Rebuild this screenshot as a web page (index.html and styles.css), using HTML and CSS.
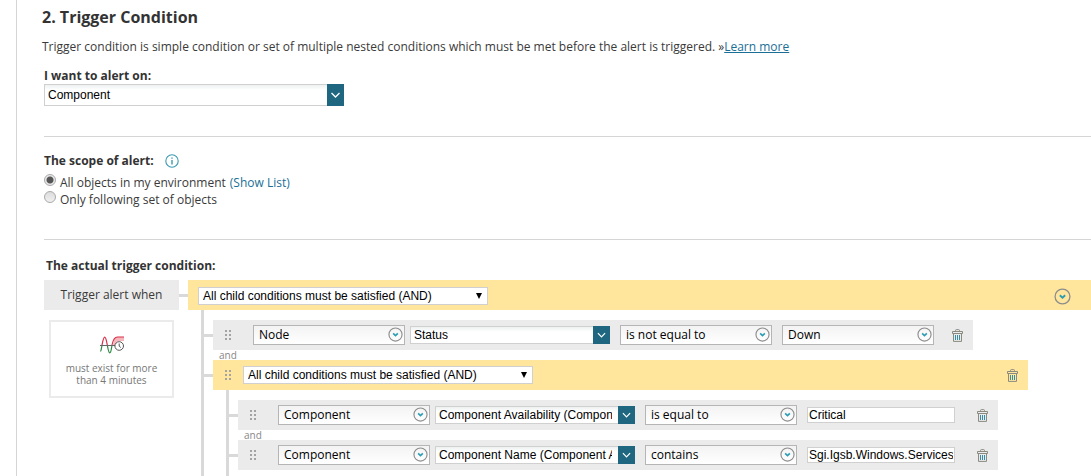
FILE: index.html
```html
<!DOCTYPE html>
<html lang="en">
<head>
  <meta charset="UTF-8">
  <title>Trigger Condition</title>
  <link rel="stylesheet" href="styles.css">
</head>
<body>

  <!-- shared icons -->
  <svg class="sprite" width="0" height="0" aria-hidden="true">
    <symbol id="chevron" viewBox="0 0 17 20">
      <path d="M4.5 8 L8.5 12 L12.5 8" fill="none" stroke="#fff" stroke-width="1.3"/>
    </symbol>
    <symbol id="circle-down" viewBox="0 0 16 16">
      <circle cx="8" cy="8" r="7" fill="none" stroke="#8c8c8c" stroke-width="1.2"/>
      <path d="M5.5 6.8 L8 9.2 L10.5 6.8" fill="none" stroke="#2b9bb3" stroke-width="1.7"/>
    </symbol>
    <symbol id="trash" viewBox="0 0 11 13">
      <path d="M3.5 2.5 V1.5 Q3.5 0.6 4.5 0.6 H6.5 Q7.5 0.6 7.5 1.5 V2.5 M0.5 4.5 V2.5 H10.5 V4.5 Z M1.5 4.5 V12.4 H9.5 V4.5" fill="none" stroke="#8a8a80"/>
      <path d="M3.5 6 V11 M5.5 6 V11 M7.5 6 V11" stroke="#338fa8"/>
    </symbol>
    <symbol id="grip" viewBox="0 0 6 10">
      <path d="M0 0h2v2h-2z M4 0h2v2h-2z M0 4h2v2h-2z M4 4h2v2h-2z M0 8h2v2h-2z M4 8h2v2h-2z" fill="#a3a3a3"/>
    </symbol>
  </svg>

  <main class="panel">
    <h1>2. Trigger Condition</h1>
    <p class="intro">Trigger condition is simple condition or set of multiple nested conditions which must be met before the alert is triggered. »<a href="#">Learn more</a></p>

    <section class="block alert-on">
      <label class="title" for="alertOn">I want to alert on:</label>
      <div class="combo combo-large">
        <select id="alertOn"><option>Component</option></select>
        <svg><use href="#chevron"/></svg>
      </div>
    </section>

    <section class="block scope">
      <h2 class="title">The scope of alert:
        <svg class="info" viewBox="0 0 14 14">
          <circle cx="7" cy="7" r="6.2" fill="none" stroke="#3b9ab2" stroke-width="1.1"/>
          <path d="M7 3.4 V4.8 M7 6 V10.4" stroke="#3b9ab2" stroke-width="1.4"/>
        </svg>
      </h2>
      <div class="radio-row">
        <input type="radio" name="scope" id="scopeAll" checked>
        <label for="scopeAll">All objects in my environment</label>
        <a href="#">(Show List)</a>
      </div>
      <div class="radio-row">
        <input type="radio" name="scope" id="scopeSet">
        <label for="scopeSet">Only following set of objects</label>
      </div>
    </section>

    <section class="block trigger">
      <h2 class="title">The actual trigger condition:</h2>

      <div class="builder">
        <div class="side">
          <div class="when">Trigger alert when</div>
          <div class="duration">
            <svg viewBox="0 0 24 18">
              <path d="M13 9 C14 3 15.5 1 18 1 H24 V5 H18 L15 9 Z" fill="#f6b7bd"/>
              <path d="M2 9 C3 4 3.5 1.2 4.7 1.2 C6 1.2 6.5 5 7.3 9 M12 9 C13 4 14.5 1 17.5 1 H24" fill="none" stroke="#d9304a" stroke-width="1.2"/>
              <path d="M0.5 15.5 C1.3 14.5 1.6 11.5 2 9 M7.3 9 C8 13 8.5 16.8 9.8 16.8 C11 16.8 11.4 13 12 9" fill="none" stroke="#2e8b45" stroke-width="1.2"/>
              <path d="M0 9.5 H15" stroke="#666"/>
              <circle cx="19.2" cy="10" r="4.3" fill="#fff" stroke="#555"/>
              <path d="M19.2 7.5 V10.2 L20.8 11.5" fill="none" stroke="#555"/>
            </svg>
            must exist for more than 4 minutes
          </div>
        </div>

        <div class="tree">
          <div class="group root">
            <div class="group-select">
              <select aria-label="Group operator"><option>All child conditions must be satisfied (AND)</option></select>
              <span class="arrow"></span>
            </div>
            <button class="more" aria-label="More"><svg><use href="#circle-down"/></svg></button>
          </div>

          <ul class="children">
            <li>
              <div class="condition">
                <svg class="grip"><use href="#grip"/></svg>
                <div class="drop"><select aria-label="Object"><option>Node</option></select><svg><use href="#circle-down"/></svg></div>
                <div class="combo"><select aria-label="Field"><option>Status</option></select><svg><use href="#chevron"/></svg></div>
                <div class="drop"><select aria-label="Operator"><option>is not equal to</option></select><svg><use href="#circle-down"/></svg></div>
                <div class="drop"><select aria-label="Value"><option>Down</option></select><svg><use href="#circle-down"/></svg></div>
                <button class="delete" aria-label="Delete"><svg><use href="#trash"/></svg></button>
              </div>
              <div class="joiner">and</div>
            </li>
            <li>
              <div class="group nested">
                <svg class="grip"><use href="#grip"/></svg>
                <div class="group-select">
                  <select aria-label="Group operator"><option>All child conditions must be satisfied (AND)</option></select>
                  <span class="arrow"></span>
                </div>
                <button class="delete" aria-label="Delete"><svg><use href="#trash"/></svg></button>
              </div>

              <ul class="children">
                <li>
                  <div class="condition">
                    <svg class="grip"><use href="#grip"/></svg>
                    <div class="drop"><select aria-label="Object"><option>Component</option></select><svg><use href="#circle-down"/></svg></div>
                    <div class="combo"><select aria-label="Field"><option>Component Availability (Component)</option></select><svg><use href="#chevron"/></svg></div>
                    <div class="drop"><select aria-label="Operator"><option>is equal to</option></select><svg><use href="#circle-down"/></svg></div>
                    <input type="text" aria-label="Value" value="Critical">
                    <button class="delete" aria-label="Delete"><svg><use href="#trash"/></svg></button>
                  </div>
                  <div class="joiner">and</div>
                </li>
                <li>
                  <div class="condition">
                    <svg class="grip"><use href="#grip"/></svg>
                    <div class="drop"><select aria-label="Object"><option>Component</option></select><svg><use href="#circle-down"/></svg></div>
                    <div class="combo"><select aria-label="Field"><option>Component Name (Component APM)</option></select><svg><use href="#chevron"/></svg></div>
                    <div class="drop"><select aria-label="Operator"><option>contains</option></select><svg><use href="#circle-down"/></svg></div>
                    <input type="text" aria-label="Value" value="Sgi.Igsb.Windows.Services">
                    <button class="delete" aria-label="Delete"><svg><use href="#trash"/></svg></button>
                  </div>
                </li>
              </ul>
            </li>
          </ul>
        </div>
      </div>
    </section>
  </main>

</body>
</html>
```

FILE: styles.css
```css
* {
  box-sizing: border-box;
}

body {
  margin: 0;
  background: #fff;
  color: #3a3a3a;
  font-family: "Open Sans", sans-serif;
  font-size: 12px;
  line-height: 16px;
}

.sprite {
  position: absolute;
}

.panel {
  min-height: 100vh;
  margin-left: 16px;
  padding: 6px 0 0 25px;
  border-left: 1px solid #d5d5d5;
}

h1 {
  margin: 0;
  color: #333;
  font-size: 16px;
  font-weight: 700;
  line-height: 22px;
}

.intro {
  margin: 10px 0 0;
  line-height: 18px;
}

a {
  color: #1b6f96;
}

.block {
  margin-left: 2px;
}

.title {
  display: block;
  margin: 0;
  color: #333;
  font-size: 12px;
  font-weight: 700;
  line-height: 16px;
}

.alert-on {
  padding: 12px 0 30px;
}

.scope {
  padding: 16px 0 31px;
  border-top: 1px solid #d5d5d5;
}

.scope .title {
  display: flex;
  align-items: center;
  gap: 11px;
  margin-bottom: 5px;
}

.info {
  width: 14px;
  height: 14px;
}

.trigger {
  padding-top: 18px;
  border-top: 1px solid #d5d5d5;
}

.trigger .title {
  margin-left: 2px;
}

/* form controls */
select,
input,
button {
  margin: 0;
  padding: 0;
  font: inherit;
  color: #000;
}

select {
  appearance: none;
  display: block;
  width: 100%;
  height: 100%;
  border-radius: 0;
}

button {
  display: flex;
  border: 0;
  background: none;
  cursor: pointer;
}

.radio-row {
  display: flex;
  gap: 4px;
  line-height: 17px;
}

.radio-row a {
  text-decoration: none;
}

input[type="radio"] {
  appearance: none;
  width: 12px;
  height: 12px;
  border: 1px solid #a9a9a9;
  border-radius: 50%;
  background: linear-gradient(#dcdcdc, #f0f0f0);
}

input[type="radio"]:checked {
  background: radial-gradient(circle, #555 3px, #e8e8e8 4px);
}

.combo {
  position: relative;
  width: 200px;
  height: 18px;
}

.combo select {
  padding: 0 22px 0 3px;
  border: 1px solid #d0d0d0;
  background: linear-gradient(#eef1f1, #fff 5px);
  font-family: "Liberation Sans", Arial, sans-serif;
}

.combo svg {
  position: absolute;
  top: 0;
  right: 0;
  width: 17px;
  height: 100%;
  background: #1f6780;
  pointer-events: none;
}

.combo-large {
  width: 300px;
  height: 22px;
}

.drop {
  position: relative;
  width: 152px;
  height: 20px;
}

.drop select {
  padding: 0 20px 0 5px;
  border: 1px solid #b5b5b5;
  background: linear-gradient(#f3f3f3, #fff);
}

.drop svg {
  position: absolute;
  top: 2px;
  right: 2px;
  width: 15px;
  height: 15px;
  pointer-events: none;
}

.group-select {
  position: relative;
  width: 290px;
  height: 18px;
}

.group-select select {
  padding: 0 20px 0 4px;
  border: 1px solid #d0d0d0;
  background: #fff;
  font-family: "Liberation Sans", Arial, sans-serif;
}

.arrow {
  position: absolute;
  top: 6px;
  right: 6px;
  border: 3px solid transparent;
  border-top: 6px solid #000;
  border-bottom: 0;
  pointer-events: none;
}

input[type="text"] {
  width: 148px;
  height: 16px;
  padding: 0 1px;
  border: 1px solid #d0d0d0;
  background: #fff;
  font-family: "Liberation Sans", Arial, sans-serif;
}

/* condition builder */
.builder {
  display: flex;
  margin-top: 6px;
}

.side {
  flex: none;
  width: 135px;
}

.when {
  height: 30px;
  background: #ebebeb;
  line-height: 30px;
  text-align: center;
}

.duration {
  margin: 10px 5px 0;
  padding: 14px 12px 10px;
  border: 2px solid #ebebeb;
  color: #777;
  font-size: 10px;
  line-height: 12px;
  text-align: center;
}

.duration svg {
  display: block;
  width: 24px;
  height: 18px;
  margin: 0 auto 8px;
}

.tree {
  flex: 1;
}

.group {
  display: flex;
  align-items: center;
  height: 30px;
  background: #ffe69c;
}

.root {
  margin-left: 9px;
  padding: 2px 20px 0 10px;
}

.nested {
  max-width: 815px;
  padding-right: 10px;
}

.more {
  margin-left: auto;
}

.more svg {
  width: 17px;
  height: 17px;
}

.delete {
  margin-left: auto;
}

.delete svg {
  width: 11px;
  height: 13px;
}

.grip {
  flex: none;
  width: 6px;
  height: 10px;
  margin: 0 12px;
}

.children {
  margin: 0 0 0 13px;
  padding: 10px 0 0 9px;
  border-left: 3px solid #d9d9d9;
  list-style: none;
}

.root + .children {
  margin-left: 22px;
}

.nested + .children {
  padding-bottom: 6px;
}

.condition {
  display: flex;
  align-items: center;
  width: 760px;
  height: 30px;
  padding-right: 10px;
  background: #ebebeb;
}

.condition .grip {
  margin-right: 22px;
}

.condition .combo {
  margin: 0 10px 0 5px;
}

.condition .drop + .drop,
.condition .drop + input {
  margin-left: 10px;
}

.joiner {
  height: 10px;
  padding-left: 6px;
  color: #888;
  font-size: 10px;
  line-height: 10px;
}

/* connector lines */
.root,
.condition,
.nested {
  position: relative;
}

.root::before,
.condition::before,
.nested::before {
  content: "";
  position: absolute;
  top: 14px;
  left: -9px;
  width: 9px;
  height: 3px;
  background: #d9d9d9;
}
```
